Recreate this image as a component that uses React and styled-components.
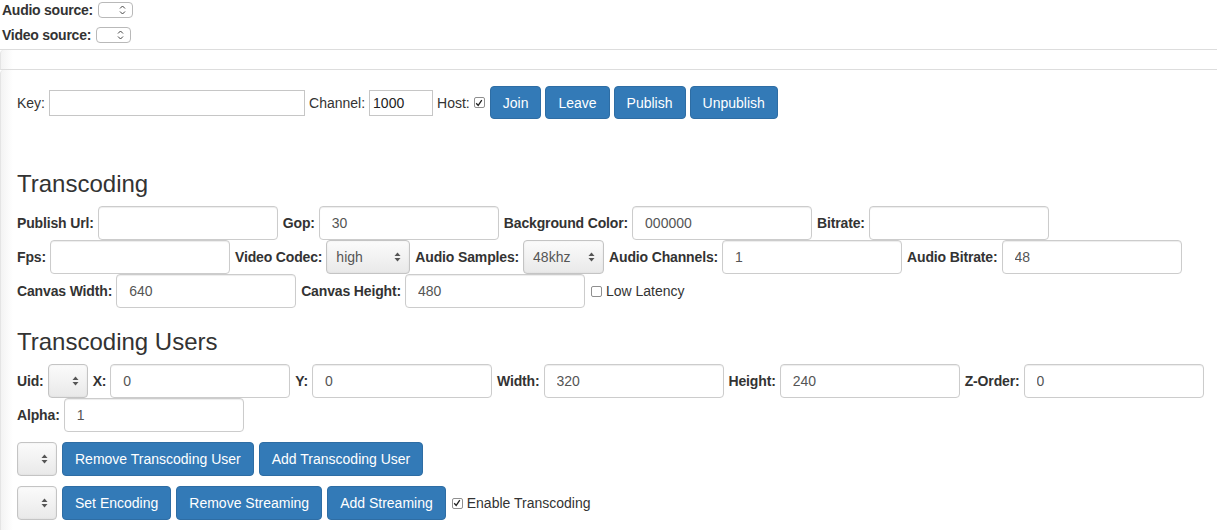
import React from "react";
import styled, { createGlobalStyle } from "styled-components";

const GlobalStyle = createGlobalStyle`
  body {
    margin: 0;
    background: #fff;
    font-family: "Liberation Sans", Helvetica, Arial, sans-serif;
    font-size: 14px;
    color: #333;
  }
  * { box-sizing: border-box; }
`;

const Sources = styled.div`
  display: flex;
  flex-direction: column;
  gap: 9px;
  padding: 2px 0 6px 2px;
  border-bottom: 1px solid #ddd;
`;

const SourceRow = styled.div`
  display: flex;
  align-items: center;
  gap: 5px;
  height: 16px;
`;

const SourceLabel = styled.span`
  font-weight: bold;
  letter-spacing: -0.25px;
`;

const SmallSelect = styled.span`
  position: relative;
  display: inline-block;
  width: 35px;
  height: 16px;
  border: 1px solid #b9b9b9;
  border-radius: 4px;
  background: #fff;
`;

const Strip = styled.div`
  height: 20px;
  border-left: 1px solid #e4e4e4;
  border-bottom: 1px solid #ddd;
  border-top-left-radius: 4px;
  background: linear-gradient(to right, #f3f3f3, #fff 12px);
`;

const Panel = styled.section`
  border-left: 1px solid #e4e4e4;
  border-top-left-radius: 4px;
  padding: 16px 0 20px 16px;
  background: linear-gradient(to right, #f3f3f3, #fff 12px);
  min-height: 460px;
`;

const KeyRow = styled.div`
  display: flex;
  align-items: center;
  gap: 4px;
  height: 33px;
`;

const PlainInput = styled.input`
  width: ${(p) => p.$w}px;
  height: 26px;
  border: 1px solid #c6c6c6;
  padding: 1px 3px;
  font: inherit;
  color: #222;
  outline: none;
`;

const Buttons = styled.div`
  display: flex;
  gap: 4px;
  margin-left: 1px;
`;

const Btn = styled.button`
  height: ${(p) => p.$h || 34}px;
  padding: 0 12px;
  background: #337ab7;
  border: 1px solid #2e6da4;
  border-radius: 4px;
  color: #fff;
  font: inherit;
  white-space: nowrap;
  cursor: pointer;
`;

const Heading = styled.h3`
  margin: ${(p) => p.$top}px 0 9px 0;
  font-size: 24px;
  line-height: 26px;
  font-weight: 500;
  color: #333;
`;

const FormRow = styled.div`
  display: flex;
  align-items: center;
  gap: 5px;
  height: 34px;
  margin-top: ${(p) => p.$mt || 0}px;
`;

const Group = styled.div`
  display: flex;
  align-items: center;
  gap: 4px;
`;

const Label = styled.label`
  font-weight: bold;
  letter-spacing: -0.15px;
  white-space: nowrap;
`;

const TextInput = styled.input`
  width: 180px;
  height: 34px;
  padding: 6px 12px;
  border: 1px solid #ccc;
  border-radius: 4px;
  box-shadow: inset 0 1px 1px rgba(0, 0, 0, 0.075);
  font: inherit;
  color: #555;
  outline: none;
`;

const GraySelect = styled.span`
  position: relative;
  display: inline-flex;
  align-items: center;
  width: ${(p) => p.$w}px;
  height: 34px;
  padding-left: 9px;
  border: 1px solid #c4c4c4;
  border-radius: 4px;
  background: linear-gradient(#fbfbfb, #e9e9e9);
  box-shadow: inset 0 0 2px rgba(0, 0, 0, 0.08);
  color: #555;
`;

const Arrows = styled.svg`
  position: absolute;
  right: ${(p) => p.$r || 8}px;
  top: 50%;
  transform: translateY(-50%);
`;

const Check = styled.span`
  display: inline-flex;
  align-items: center;
  justify-content: center;
  width: 11px;
  height: 11px;
  border: 1px solid #8f8f8f;
  border-radius: 2px;
  background: #fff;
  margin-left: ${(p) => p.$ml || 0}px;
`;

const CheckText = styled.span`
  white-space: nowrap;
`;

function UpDown() {
  return (
    <Arrows width="7" height="11" viewBox="0 0 7 11">
      <path d="M3.5 1 L6.5 4.5 H0.5 Z" fill="#555" />
      <path d="M3.5 10 L6.5 6.5 H0.5 Z" fill="#555" />
    </Arrows>
  );
}

function Chevrons() {
  return (
    <Arrows $r={6} width="7" height="10" viewBox="0 0 7 10">
      <path d="M1 3.5 L3.5 1 L6 3.5 M1 6.5 L3.5 9 L6 6.5" fill="none" stroke="#444" strokeWidth="1" />
    </Arrows>
  );
}

function CheckBox({ checked, ml }) {
  return (
    <Check $ml={ml}>
      {checked && (
        <svg width="8" height="8" viewBox="0 0 8 8">
          <path d="M1.2 4.2 L3.2 6.4 L6.8 1.2" fill="none" stroke="#222" strokeWidth="1.3" />
        </svg>
      )}
    </Check>
  );
}

function Field({ label, value = "" }) {
  return (
    <Group>
      <Label>{label}</Label>
      <TextInput defaultValue={value} />
    </Group>
  );
}

function Picker({ label, value, w }) {
  return (
    <Group>
      {label && <Label>{label}</Label>}
      <GraySelect $w={w}>
        {value}
        <UpDown />
      </GraySelect>
    </Group>
  );
}

export default function App() {
  return (
    <>
      <GlobalStyle />
      <Sources>
        <SourceRow>
          <SourceLabel>Audio source:</SourceLabel>
          <SmallSelect>
            <Chevrons />
          </SmallSelect>
        </SourceRow>
        <SourceRow>
          <SourceLabel>Video source:</SourceLabel>
          <SmallSelect>
            <Chevrons />
          </SmallSelect>
        </SourceRow>
      </Sources>
      <Strip />
      <Panel>
        <KeyRow>
          <span>Key:</span>
          <PlainInput $w={256} />
          <span>Channel:</span>
          <PlainInput $w={64} defaultValue="1000" />
          <span>Host:</span>
          <CheckBox checked />
          <Buttons>
            <Btn $h={33}>Join</Btn>
            <Btn $h={33}>Leave</Btn>
            <Btn $h={33}>Publish</Btn>
            <Btn $h={33}>Unpublish</Btn>
          </Buttons>
        </KeyRow>

        <Heading $top={52}>Transcoding</Heading>
        <FormRow>
          <Field label="Publish Url:" />
          <Field label="Gop:" value="30" />
          <Field label="Background Color:" value="000000" />
          <Field label="Bitrate:" />
        </FormRow>
        <FormRow>
          <Field label="Fps:" />
          <Picker label="Video Codec:" value="high" w={84} />
          <Picker label="Audio Samples:" value="48khz" w={81} />
          <Field label="Audio Channels:" value="1" />
          <Field label="Audio Bitrate:" value="48" />
        </FormRow>
        <FormRow>
          <Field label="Canvas Width:" value="640" />
          <Field label="Canvas Height:" value="480" />
          <Group>
            <CheckBox ml={1} />
            <CheckText>Low Latency</CheckText>
          </Group>
        </FormRow>

        <Heading $top={21}>Transcoding Users</Heading>
        <FormRow>
          <Picker label="Uid:" w={40} />
          <Field label="X:" value="0" />
          <Field label="Y:" value="0" />
          <Field label="Width:" value="320" />
          <Field label="Height:" value="240" />
          <Field label="Z-Order:" value="0" />
        </FormRow>
        <FormRow>
          <Field label="Alpha:" value="1" />
        </FormRow>
        <FormRow $mt={10}>
          <Picker w={40} />
          <Btn>Remove Transcoding User</Btn>
          <Btn>Add Transcoding User</Btn>
        </FormRow>
        <FormRow $mt={10}>
          <Picker w={40} />
          <Btn>Set Encoding</Btn>
          <Btn>Remove Streaming</Btn>
          <Btn>Add Streaming</Btn>
          <Group>
            <CheckBox checked ml={1} />
            <CheckText>Enable Transcoding</CheckText>
          </Group>
        </FormRow>
      </Panel>
    </>
  );
}
